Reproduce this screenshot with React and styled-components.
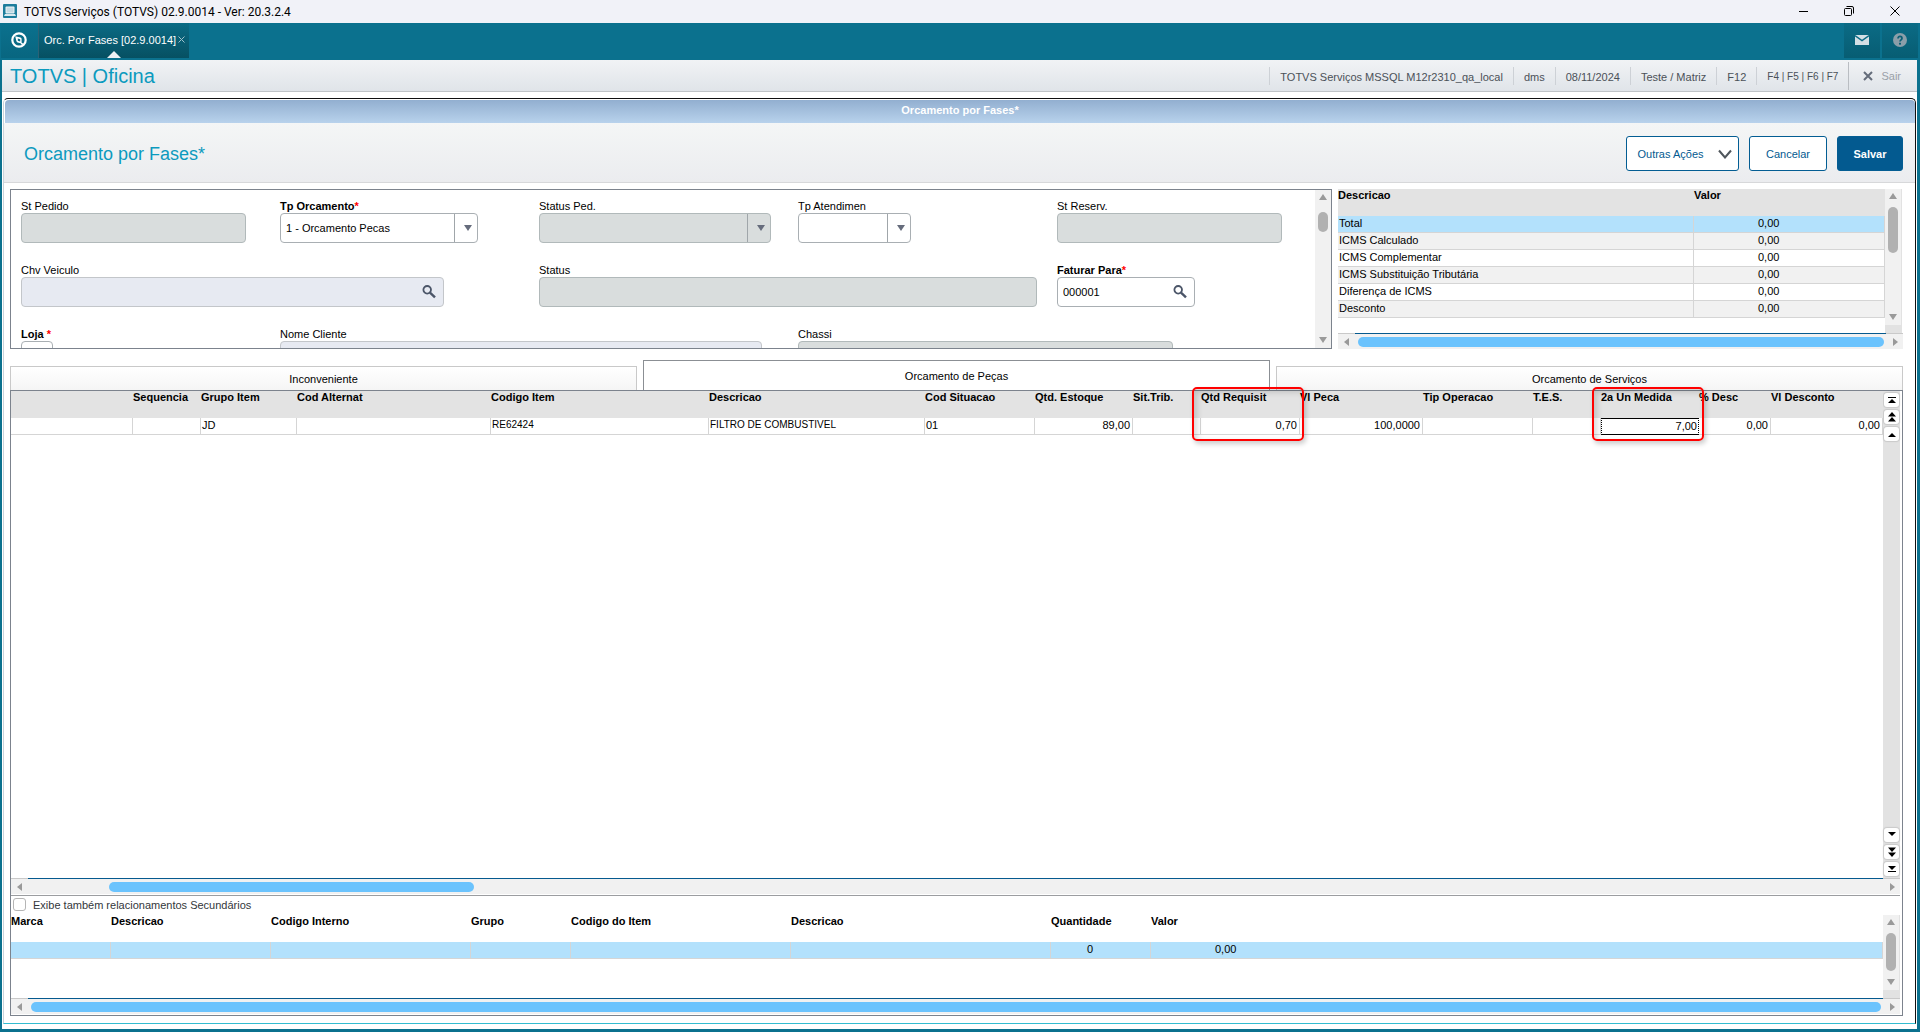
import React, { useId, useState } from 'react';
import styled, { createGlobalStyle, css } from 'styled-components';

const GlobalStyle = createGlobalStyle`
  * {
    box-sizing: border-box;
  }

  body {
    margin: 0;
    background: #0b718e;
    color: #000;
    font-family: "Liberation Sans", Arial, sans-serif;
    font-size: 11px;
    line-height: 14px;
  }

  button, input, select {
    margin: 0;
    font-family: inherit;
    font-size: inherit;
    line-height: inherit;
    color: inherit;
  }
`;

const Window = styled.div`
  display: flex;
  flex-direction: column;
  min-height: 100vh;
  background: #0b718e;
`;

/* title bar of the desktop window */
const TitleBar = styled.header`
  display: flex;
  align-items: center;
  height: 23px;
  padding: 0 15px 0 3px;
  background: #f1f2f8;
  font-family: Roboto, "Open Sans", sans-serif;
  font-size: 12px;
`;

const TitleText = styled.span`
  flex: 1;
  margin-left: 7px;
`;

const WindowButtons = styled.div`
  display: flex;
  gap: 26px;
  padding-bottom: 2px;
`;

const PlainButton = styled.button`
  display: flex;
  align-items: center;
  justify-content: center;
  padding: 0;
  border: 0;
  background: none;
`;

/* teal bar with the open programs */
const ProgramBar = styled.nav`
  display: flex;
  height: 37px;
  padding: 0 2px 2px 1px;
  color: #fff;
`;

const HomeButton = styled(PlainButton)`
  width: 38px;
  padding: 0 1px 1px 0;
  border-right: 1px solid #2b6276;
  background: linear-gradient(#0b718e, #086680);
`;

const ProgramTab = styled.div`
  position: relative;
  display: flex;
  justify-content: space-between;
  width: 150px;
  padding: 10px 4px 0 5px;
  background: linear-gradient(#0b6b85, #065062);

  &::after {
    content: "";
    position: absolute;
    left: 68px;
    bottom: 0;
    border: 7px solid transparent;
    border-top: 0;
    border-bottom-color: #eef0f3;
  }
`;

const TabClose = styled(PlainButton)`
  height: 12px;
  color: #9fc0ca;
`;

const BarTools = styled.div`
  display: flex;
  gap: 2px;
  margin-left: auto;
`;

const BarTool = styled(PlainButton)`
  width: 36px;
  padding-bottom: 1px;
  background: linear-gradient(#0b6b85, #075d73);
`;

const Body = styled.main`
  flex: 1;
  display: flex;
  flex-direction: column;
  margin: 0 3px 3px 2px;
  background: #fff;
`;

const ModuleBar = styled.div`
  display: flex;
  align-items: center;
  height: 32px;
  padding-left: 8px;
  background: linear-gradient(#f1f3f5, #e0e4e9);
  border-bottom: 1px solid #bfc3c7;
`;

const ModuleTitle = styled.h1`
  flex: 1;
  margin: 0;
  color: #0c9abe;
  font-size: 20px;
  line-height: 24px;
  font-weight: normal;
`;

const InfoList = styled.ul`
  display: flex;
  margin: 0;
  padding: 0;
  list-style: none;
  color: #4b5158;
`;

const InfoItem = styled.li`
  padding: 3px 10px 1px;
  border-left: 1px solid #cdd1d6;
  font-size: ${(p) => (p.$small ? 10 : 11)}px;
`;

const ExitButton = styled(PlainButton)`
  gap: 8px;
  height: 28px;
  padding: 0 16px 0 14px;
  border-left: 1px solid #b9bdc2;
  color: #9aa0a8;
`;

const Dialog = styled.section`
  flex: 1;
  display: flex;
  flex-direction: column;
  margin: 6px 1px 5px;
  border: 1px solid #111;
  border-left-color: #c9d3da;
  border-bottom-color: #33bcd0;
  border-radius: 5px 5px 0 0;
`;

const DialogTitle = styled.div`
  height: 23px;
  margin: 1px 0 0 1px;
  background: linear-gradient(#92afd0, #b8d2ec);
  border-radius: 4px 4px 0 0;
  color: #fff;
  font-weight: bold;
  line-height: 20px;
  text-align: center;
`;

const Toolbar = styled.div`
  display: flex;
  align-items: center;
  gap: 10px;
  height: 60px;
  padding: 2px 12px 0 20px;
  background: linear-gradient(#f4f6f6, #ebecef);
  border-bottom: 1px solid #d7d8da;
`;

const ToolbarTitle = styled.h2`
  flex: 1;
  margin: 0;
  color: #0c9abe;
  font-size: 18px;
  line-height: 22px;
  font-weight: normal;
`;

const ActionButton = styled.button`
  display: flex;
  align-items: center;
  justify-content: center;
  gap: 14px;
  width: ${(p) => p.$width}px;
  height: 35px;
  padding: 0;
  border: 1px solid #035d93;
  border-radius: 3px;
  background: ${(p) => (p.$primary ? '#035a90' : '#fff')};
  color: ${(p) => (p.$primary ? '#fff' : '#035a90')};
  font-weight: ${(p) => (p.$primary ? 'bold' : 'normal')};
`;

const MenuButton = styled(ActionButton)`
  padding-left: 4px;
`;

const Content = styled.div`
  flex: 1;
  display: flex;
  flex-direction: column;
  padding: 6px 12px 7px 6px;
`;

const TopRow = styled.div`
  display: flex;
  gap: 5px;
  height: 160px;
`;

const FormPanel = styled.form`
  flex: 1;
  display: flex;
  min-width: 0;
  border: 1px solid #7c838d;
`;

const FormGrid = styled.div`
  flex: 1;
  display: grid;
  grid-template-columns: repeat(5, 259px);
  grid-auto-rows: 44px;
  row-gap: 20px;
  padding: 9px 0 0 10px;
  overflow: hidden;
`;

const FieldBox = styled.div`
  grid-column: ${(p) => p.$col};
  grid-row: ${(p) => p.$row};
  width: ${(p) => p.$width}px;
`;

const FieldLabel = styled.label`
  display: block;
  font-weight: ${(p) => (p.$required ? 'bold' : 'normal')};
`;

const Required = styled.span`
  color: #f00;
`;

const fieldLook = css`
  height: 30px;
  border: 1px solid #a9afb3;
  border-radius: 4px;
  background: #fff;

  ${(p) => p.$tone === 'disabled' && css`
    background: #d9dddd;
    border-color: #b1b9ba;
  `}

  ${(p) => p.$tone === 'soft' && css`
    background: #e7eaf2;
    border-color: #c3c6ca;
  `}
`;

const FieldShell = styled.div`
  ${fieldLook}
  display: flex;
  align-items: center;
  overflow: hidden;
`;

const TextInput = styled.input`
  flex: 1;
  min-width: 0;
  height: 28px;
  padding: 0 5px;
  border: 0;
  outline: 0;
  background: none;
`;

const SelectInput = styled.select`
  flex: 1;
  min-width: 0;
  height: 28px;
  padding: 0 5px;
  border: 0;
  outline: 0;
  background: none;
  appearance: none;
  opacity: 1;
`;

const SelectArrow = styled.span`
  display: flex;
  align-items: center;
  justify-content: center;
  width: 23px;
  height: 28px;
  padding-left: 3px;
  border-left: 1px solid #a0a6aa;
  pointer-events: none;
`;

const LookupButton = styled(PlainButton)`
  width: 28px;
  height: 28px;
`;

/* scrollbars */
const VTrack = styled.div`
  display: flex;
  flex-direction: column;
  align-items: center;
  width: 16px;
  padding: 4px 0;
  background: #f1f1f1;
`;

const VThumb = styled.div`
  width: 10px;
  height: ${(p) => p.$size}px;
  margin: ${(p) => p.$start}px 0 auto;
  border-radius: 5px;
  background: #b1b1b1;
`;

const VCorner = styled.div`
  height: 8px;
  background: #e2e2e2;
`;

const VColumn = styled.div`
  display: flex;
  flex-direction: column;
  width: 17px;

  ${VTrack} {
    flex: 1;
    width: 100%;
    border-right: 1px solid #e2e2e2;
  }
`;

const HBar = styled.div`
  display: flex;
  align-items: center;
  height: 16px;
  margin-bottom: ${(p) => p.$gap || 0}px;
  background: #f1f1f1;
  border-top: 1px solid #c9c9c9;
`;

const HArrow = styled(PlainButton)`
  width: 17px;
  height: 15px;
`;

const HTrack = styled.div`
  flex: 1;
  align-self: stretch;
  display: flex;
  align-items: center;
  margin-top: -1px;
  border-top: 1px solid #055a8f;
`;

const HThumb = styled.div`
  flex: ${(p) => (p.$size ? '0 0 ' + p.$size + 'px' : '1')};
  height: 10px;
  margin: 0 2px 0 ${(p) => p.$start || 3}px;
  border-radius: 5px;
  background: #6bc3fd;
`;

/* data grids */
const Table = styled.table`
  width: 100%;
  border-collapse: separate;
  border-spacing: 0;
  table-layout: fixed;
`;

const HeadCell = styled.th`
  position: relative;
  height: 27px;
  padding: 0;
  background: ${(p) => (p.$plain ? '#fff' : '#e3e3e3')};
  font-weight: bold;
  line-height: 12px;
  text-align: left;
  vertical-align: top;
  white-space: nowrap;
`;

const Cell = styled.td`
  height: 17px;
  padding: 0 2px 0 ${(p) => p.$indent || 1}px;
  border-right: 1px solid #d5d5d5;
  border-bottom: 1px solid #d5d5d5;
  font-size: ${(p) => (p.$small ? 10 : 11)}px;
  line-height: 14px;
  text-align: ${(p) => p.$align || 'left'};
  vertical-align: top;
  white-space: nowrap;
`;

const Row = styled.tr`
  background: ${(p) => p.$bg || '#fff'};
`;

const CellInput = styled.input`
  display: block;
  width: 100%;
  height: 17px;
  padding: 0 1px 2px;
  border: 1px solid #000;
  border-left-style: dotted;
  border-right-style: dotted;
  outline: 0;
  background: #fff;
  text-align: right;
`;

const EditCell = styled(Cell)`
  padding: 0;
  border: 0;
`;

const Highlight = styled.span`
  position: absolute;
  z-index: 2;
  top: -4px;
  left: -9px;
  width: 112px;
  height: 54px;
  border: 2px solid #f00;
  border-radius: 5px;
  box-shadow: 2px 3px 5px rgba(0, 0, 0, 0.2), inset 3px 3px 6px rgba(0, 0, 0, 0.16);
  pointer-events: none;
`;

const Summary = styled.div`
  flex: 0 0 566px;
  display: flex;
  flex-direction: column;
  padding-left: 1px;
`;

const GridArea = styled.div`
  flex: ${(p) => (p.$fixed ? 'none' : 1)};
  height: ${(p) => (p.$fixed ? p.$fixed + 'px' : 'auto')};
  display: flex;
  min-height: 0;
`;

const SummaryArea = styled(GridArea)`
  padding-right: 1px;
`;

const GridBody = styled.div`
  flex: 1;
  min-width: 0;
`;

/* tabs */
const Tabs = styled.div`
  display: flex;
  align-items: flex-end;
  gap: 6px;
  height: 30px;
  margin-top: 11px;
`;

const Tab = styled.button`
  flex: 1;
  height: ${(p) => (p.$active ? 30 : 24)}px;
  padding: 0;
  border: 1px solid ${(p) => (p.$active ? '#8b8f94' : '#c9c9c9')};
  border-bottom: 0;
  background: ${(p) => (p.$active ? '#fff' : 'linear-gradient(#fff, #f5f5f5)')};
`;

const TabPanel = styled.section`
  flex: 1;
  display: flex;
  flex-direction: column;
  padding-right: 2px;
  border: 1px solid #7c838d;
`;

const NavRail = styled.div`
  display: flex;
  flex-direction: column;
  align-items: center;
  gap: 3px;
  width: 17px;
  padding: 2px 0;
  background: #e2e2e2;
`;

const NavButton = styled(PlainButton)`
  width: 15px;
  height: 14px;
  border-radius: 3px;
  background: #fff;
  box-shadow: 0 0 1px 1px #cacaca;
`;

const RailSpace = styled.span`
  flex: 1;
`;

const CheckRow = styled.label`
  display: flex;
  align-items: center;
  gap: 7px;
  height: 18px;
  margin-bottom: 2px;
  padding-left: 2px;
  border-top: 1px solid #9b9da0;
  color: #33373b;
`;

const CheckInput = styled.input`
  width: 13px;
  height: 13px;
  border: 1px solid #b5b5b5;
  border-radius: 3px;
  background: #fff;
  appearance: none;
`;

const Arrow = ({ dir = 'down', color = '#9a9a9a' }) => {
  const points = {
    up: '0,6 4,0 8,6',
    down: '0,1 8,1 4,7',
    left: '6,0 6,8 1,4',
    right: '2,0 2,8 7,4',
  };
  return (
    <svg width="8" height="8" viewBox="0 0 8 8" aria-hidden="true">
      <polygon points={points[dir]} fill={color} />
    </svg>
  );
};

const SearchIcon = () => (
  <svg width="14" height="14" viewBox="0 0 14 14" fill="none" stroke="#4b5568">
    <circle cx="5.2" cy="4.8" r="3.8" strokeWidth="1.8" />
    <path d="M8 7.6l5 4.8" strokeWidth="2.4" />
  </svg>
);

const AppIcon = () => (
  <svg width="14" height="15" viewBox="0 0 14 15">
    <rect width="14" height="14" rx="1" fill="#1d7d9d" />
    <rect x="2.5" y="2.5" width="9" height="7" rx="1" fill="#eef4f7" />
    <rect x="3.5" y="3.5" width="7" height="5" fill="#c3d9e4" />
    <path d="M2 10h10l1 2H1z" fill="#dbe9ef" />
  </svg>
);

const TotvsIcon = () => (
  <svg width="16" height="16" viewBox="0 0 16 16">
    <circle cx="8" cy="8" r="6.7" fill="none" stroke="#fff" strokeWidth="2.2" />
    <path d="M4.2 4.2L9.5 5.6Q10.6 6 10.6 7v4.6L6.6 10.4Q5.4 10 5.4 9z" fill="#fff" />
    <path d="M6.8 6.6l2.4.7v2.2l-2.4-.7z" fill="#0b6b85" />
    <path d="M10 11.2l2 1.2" stroke="#fff" strokeWidth="1.6" />
  </svg>
);

const MailIcon = () => (
  <svg width="14" height="10" viewBox="0 0 14 10">
    <path d="M0 0h14v10H0z" fill="#d3dfe5" />
    <path d="M0 .6l7 5 7-5" fill="none" stroke="#0b6b85" strokeWidth="1.3" />
  </svg>
);

const HelpIcon = () => (
  <svg width="14" height="14" viewBox="0 0 14 14">
    <circle cx="7" cy="7" r="7" fill="#8b9ea9" />
    <path d="M5 5.4c0-2.6 4-2.6 4 0C9 6.8 7 7 7 8.6" fill="none" stroke="#0b5f76" strokeWidth="1.7" />
    <rect x="6" y="9.8" width="2" height="1.8" fill="#0b5f76" />
  </svg>
);

// kind: 'end' | 'page' | 'line', drawn upwards and flipped for the lower group
const NavIcon = ({ kind, flip }) => (
  <svg width="8" height="10" viewBox="0 0 8 10">
    <g transform={flip ? 'rotate(180 4 5)' : undefined}>
      {kind === 'end' && <path d="M0 2h8v1H0zM4 4l4 4H0z" />}
      {kind === 'page' && <path d="M4 0l4 4.4H0zM4 5l4 4.4H0z" />}
      {kind === 'line' && <path d="M4 4l4 4H0z" />}
    </g>
  </svg>
);

const fields = [
  { label: 'St Pedido', row: 1, col: 1, width: 225, tone: 'disabled' },
  { label: 'Tp Orcamento', row: 1, col: 2, width: 198, type: 'select', required: true, value: '1 - Orcamento Pecas' },
  { label: 'Status Ped.', row: 1, col: 3, width: 232, type: 'select', tone: 'disabled' },
  { label: 'Tp Atendimen', row: 1, col: 4, width: 113, type: 'select' },
  { label: 'St Reserv.', row: 1, col: 5, width: 225, tone: 'disabled' },
  { label: 'Chv Veiculo', row: 2, col: 1, width: 423, tone: 'soft', type: 'lookup' },
  { label: 'Status', row: 2, col: 3, width: 498, tone: 'disabled' },
  { label: 'Faturar Para', row: 2, col: 5, width: 138, type: 'lookup', required: true, value: '000001' },
  { label: 'Loja ', row: 3, col: 1, width: 32, required: true },
  { label: 'Nome Cliente', row: 3, col: 2, width: 482, tone: 'soft' },
  { label: 'Chassi', row: 3, col: 4, width: 375, tone: 'disabled' },
];

const totals = [
  'Total',
  'ICMS Calculado',
  'ICMS Complementar',
  'ICMS Substituição Tributária',
  'Diferença de ICMS',
  'Desconto',
];

const itemColumns = [
  { title: '', width: 122 },
  { title: 'Sequencia', width: 68 },
  { title: 'Grupo Item', width: 96, value: 'JD' },
  { title: 'Cod Alternat', width: 194 },
  { title: 'Codigo Item', width: 218, value: 'RE62424', small: true },
  { title: 'Descricao', width: 216, value: 'FILTRO DE COMBUSTIVEL', small: true },
  { title: 'Cod Situacao', width: 110, value: '01' },
  { title: 'Qtd. Estoque', width: 98, value: '89,00', align: 'right' },
  { title: 'Sit.Trib.', width: 68 },
  { title: 'Qtd Requisit', width: 99, value: '0,70', align: 'right', highlight: true },
  { title: 'Vl Peca', width: 123, value: '100,0000', align: 'right' },
  { title: 'Tip Operacao', width: 110 },
  { title: 'T.E.S.', width: 68 },
  { title: '2a Un Medida', width: 98, value: '7,00', edit: true, highlight: true },
  { title: '% Desc', width: 72, value: '0,00', align: 'right' },
  { title: 'Vl Desconto', value: '0,00', align: 'right' },
];

const relatedColumns = [
  { title: 'Marca', width: 100 },
  { title: 'Descricao', width: 160 },
  { title: 'Codigo Interno', width: 200 },
  { title: 'Grupo', width: 100 },
  { title: 'Codigo do Item', width: 220 },
  { title: 'Descricao', width: 260 },
  { title: 'Quantidade', width: 100, value: '0', indent: 36 },
  { title: 'Valor', value: '0,00', indent: 64 },
];

const Field = ({ label, row, col, width, type, tone, required, value = '' }) => {
  const id = useId();
  const [text, setText] = useState(value);
  const onChange = (e) => setText(e.target.value);
  const locked = tone === 'disabled';

  return (
    <FieldBox $col={col} $row={row} $width={width}>
      <FieldLabel htmlFor={id} $required={required}>
        {label}
        {required && <Required>*</Required>}
      </FieldLabel>
      <FieldShell $tone={tone}>
        {type === 'select' ? (
          <>
            <SelectInput id={id} value={text} onChange={onChange} disabled={locked}>
              <option value={value}>{value}</option>
            </SelectInput>
            <SelectArrow><Arrow color="#666c7c" /></SelectArrow>
          </>
        ) : (
          <TextInput id={id} type="text" value={text} onChange={onChange} disabled={locked} />
        )}
        {type === 'lookup' && (
          <LookupButton type="button" aria-label={'Pesquisar ' + label}><SearchIcon /></LookupButton>
        )}
      </FieldShell>
    </FieldBox>
  );
};

const VScroll = ({ size, start = 6 }) => (
  <VTrack>
    <Arrow dir="up" />
    <VThumb $size={size} $start={start} />
    <Arrow dir="down" />
  </VTrack>
);

const HScroll = ({ start, size, gap }) => (
  <HBar $gap={gap}>
    <HArrow type="button" aria-label="Esquerda"><Arrow dir="left" /></HArrow>
    <HTrack><HThumb $start={start} $size={size} /></HTrack>
    <HArrow type="button" aria-label="Direita"><Arrow dir="right" /></HArrow>
  </HBar>
);

const DataGrid = ({ columns, plain, rowColor }) => (
  <Table>
    <colgroup>
      {columns.map((c, i) => <col key={i} width={c.width} />)}
    </colgroup>
    <thead>
      <tr>
        {columns.map((c, i) => (
          <HeadCell key={i} $plain={plain}>
            {c.title}
            {c.highlight && <Highlight />}
          </HeadCell>
        ))}
      </tr>
    </thead>
    <tbody>
      <Row $bg={rowColor}>
        {columns.map((c, i) => (c.edit ? (
          <EditCell key={i}>
            <CellInput type="text" defaultValue={c.value} aria-label={c.title} />
          </EditCell>
        ) : (
          <Cell key={i} $align={c.align} $small={c.small} $indent={c.indent}>{c.value}</Cell>
        )))}
      </Row>
    </tbody>
  </Table>
);

const TotalsTable = () => (
  <Summary>
    <SummaryArea>
      <GridBody>
        <Table>
          <colgroup>
            <col width="356" />
            <col />
          </colgroup>
          <thead>
            <tr>
              <HeadCell>Descricao</HeadCell>
              <HeadCell>Valor</HeadCell>
            </tr>
          </thead>
          <tbody>
            {totals.map((name, i) => (
              <Row key={name} $bg={i === 0 ? '#b3e1fc' : i % 2 ? '#f1f1f1' : '#fff'}>
                <Cell>{name}</Cell>
                <Cell $indent={64}>0,00</Cell>
              </Row>
            ))}
          </tbody>
        </Table>
      </GridBody>
      <VColumn>
        <VScroll size={46} />
        <VCorner />
      </VColumn>
    </SummaryArea>
    <HScroll />
  </Summary>
);

const App = () => {
  const [tab, setTab] = useState('Orcamento de Peças');

  return (
    <Window>
      <GlobalStyle />
      <TitleBar>
        <AppIcon />
        <TitleText>TOTVS Serviços (TOTVS) 02.9.0014 - Ver: 20.3.2.4</TitleText>
        <WindowButtons>
          <PlainButton aria-label="Minimizar">
            <svg width="20" height="12" viewBox="0 0 20 12"><path d="M6 6.5h9" stroke="#000" /></svg>
          </PlainButton>
          <PlainButton aria-label="Restaurar">
            <svg width="20" height="12" viewBox="0 0 20 12" fill="none" stroke="#000">
              <rect x="5.5" y="3.5" width="7" height="7" rx="1" />
              <path d="M7.5 1.5h5.5q1.5 0 1.5 1.5v5.5" />
            </svg>
          </PlainButton>
          <PlainButton aria-label="Fechar">
            <svg width="20" height="12" viewBox="0 0 20 12"><path d="M5.5 1.5l9 9M14.5 1.5l-9 9" stroke="#000" /></svg>
          </PlainButton>
        </WindowButtons>
      </TitleBar>

      <ProgramBar>
        <HomeButton aria-label="Início"><TotvsIcon /></HomeButton>
        <ProgramTab>
          Orc. Por Fases [02.9.0014]
          <TabClose aria-label="Fechar aba">
            <svg width="7" height="7" viewBox="0 0 7 7" stroke="currentColor"><path d="M.5.5l6 6M6.5.5l-6 6" /></svg>
          </TabClose>
        </ProgramTab>
        <BarTools>
          <BarTool aria-label="Mensagens"><MailIcon /></BarTool>
          <BarTool aria-label="Ajuda"><HelpIcon /></BarTool>
        </BarTools>
      </ProgramBar>

      <Body>
        <ModuleBar>
          <ModuleTitle>TOTVS | Oficina</ModuleTitle>
          <InfoList>
            <InfoItem>TOTVS Serviços MSSQL M12r2310_qa_local</InfoItem>
            <InfoItem>dms</InfoItem>
            <InfoItem>08/11/2024</InfoItem>
            <InfoItem>Teste / Matriz</InfoItem>
            <InfoItem>F12</InfoItem>
            <InfoItem $small>F4 | F5 | F6 | F7</InfoItem>
          </InfoList>
          <ExitButton>
            <svg width="10" height="10" viewBox="0 0 10 10" stroke="#646c7a" strokeWidth="2"><path d="M1 1l8 8M9 1L1 9" /></svg>
            Sair
          </ExitButton>
        </ModuleBar>

        <Dialog>
          <DialogTitle>Orcamento por Fases*</DialogTitle>
          <Toolbar>
            <ToolbarTitle>Orcamento por Fases*</ToolbarTitle>
            <MenuButton $width={113}>
              Outras Ações
              <svg width="14" height="10" viewBox="0 0 14 10" fill="none" stroke="#4f565c" strokeWidth="2"><path d="M1 1.5l6 7 6-7" /></svg>
            </MenuButton>
            <ActionButton $width={78}>Cancelar</ActionButton>
            <ActionButton $width={66} $primary>Salvar</ActionButton>
          </Toolbar>

          <Content>
            <TopRow>
              <FormPanel onSubmit={(e) => e.preventDefault()}>
                <FormGrid>
                  {fields.map((f) => <Field key={f.label} {...f} />)}
                </FormGrid>
                <VScroll size={20} start={10} />
              </FormPanel>
              <TotalsTable />
            </TopRow>

            <Tabs>
              {['Inconveniente', 'Orcamento de Peças', 'Orcamento de Serviços'].map((name) => (
                <Tab key={name} $active={tab === name} onClick={() => setTab(name)}>{name}</Tab>
              ))}
            </Tabs>

            <TabPanel>
              <GridArea>
                <GridBody><DataGrid columns={itemColumns} /></GridBody>
                <NavRail>
                  <NavButton aria-label="Primeiro"><NavIcon kind="end" /></NavButton>
                  <NavButton aria-label="Página anterior"><NavIcon kind="page" /></NavButton>
                  <NavButton aria-label="Anterior"><NavIcon kind="line" /></NavButton>
                  <RailSpace />
                  <NavButton aria-label="Próximo"><NavIcon kind="line" flip /></NavButton>
                  <NavButton aria-label="Próxima página"><NavIcon kind="page" flip /></NavButton>
                  <NavButton aria-label="Último"><NavIcon kind="end" flip /></NavButton>
                </NavRail>
              </GridArea>
              <HScroll start={81} size={365} gap={1} />
              <CheckRow>
                <CheckInput type="checkbox" />
                Exibe também relacionamentos Secundários
              </CheckRow>
              <GridArea $fixed={83}>
                <GridBody><DataGrid columns={relatedColumns} plain rowColor="#b3e1fc" /></GridBody>
                <VColumn>
                  <VScroll size={38} />
                  <VCorner />
                </VColumn>
              </GridArea>
              <HScroll gap={1} />
            </TabPanel>
          </Content>
        </Dialog>
      </Body>
    </Window>
  );
};

export default App;
